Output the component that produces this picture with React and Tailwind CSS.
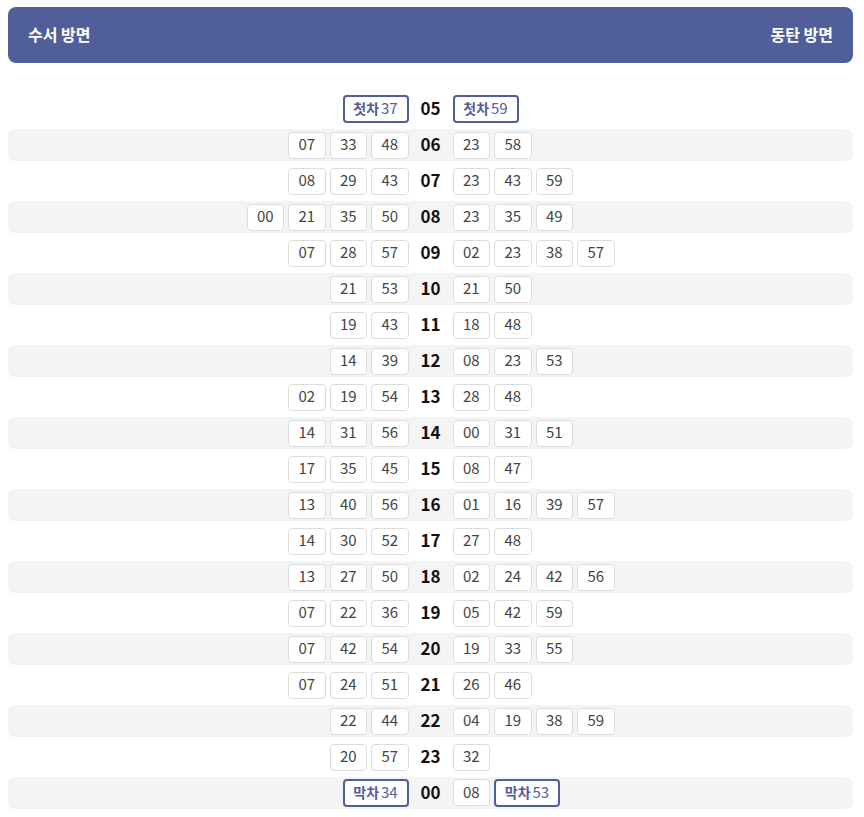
import React from "react";

const rows = [
  ["05", ["*첫차|37"], ["*첫차|59"]],
  ["06", ["07", "33", "48"], ["23", "58"]],
  ["07", ["08", "29", "43"], ["23", "43", "59"]],
  ["08", ["00", "21", "35", "50"], ["23", "35", "49"]],
  ["09", ["07", "28", "57"], ["02", "23", "38", "57"]],
  ["10", ["21", "53"], ["21", "50"]],
  ["11", ["19", "43"], ["18", "48"]],
  ["12", ["14", "39"], ["08", "23", "53"]],
  ["13", ["02", "19", "54"], ["28", "48"]],
  ["14", ["14", "31", "56"], ["00", "31", "51"]],
  ["15", ["17", "35", "45"], ["08", "47"]],
  ["16", ["13", "40", "56"], ["01", "16", "39", "57"]],
  ["17", ["14", "30", "52"], ["27", "48"]],
  ["18", ["13", "27", "50"], ["02", "24", "42", "56"]],
  ["19", ["07", "22", "36"], ["05", "42", "59"]],
  ["20", ["07", "42", "54"], ["19", "33", "55"]],
  ["21", ["07", "24", "51"], ["26", "46"]],
  ["22", ["22", "44"], ["04", "19", "38", "59"]],
  ["23", ["20", "57"], ["32"]],
  ["00", ["*막차|34"], ["08", "*막차|53"]],
];

function Box({ v }) {
  if (v.startsWith("*")) {
    const [label, min] = v.slice(1).split("|");
    return (
      <div className="h-[28px] w-[66px] pb-[3px] flex items-center justify-center rounded-[4px] border-2 border-[#4f5d99] bg-white text-[14px] text-[#4f5d99] leading-none">
        <span className="font-semibold">{label}</span>
        <span className="text-[15px] ml-[2px]">{min}</span>
      </div>
    );
  }
  return (
    <div className="h-[27px] w-[37.5px] pb-[3px] flex items-center justify-center rounded-[4px] border border-[#dcdcdc] bg-white text-[15px] text-[#444] leading-none">
      {v}
    </div>
  );
}

export default function App() {
  return (
    <div
      className="pl-2 pr-[11px] pt-[7px] bg-white min-h-[817px]"
      style={{ fontFamily: '"Noto Sans CJK KR", "Noto Sans", sans-serif' }}
    >
      <div className="h-[56px] rounded-lg bg-[#505f99] px-5 pb-[2px] flex items-center justify-between text-white font-bold text-[16px]">
        <span>수서 방면</span>
        <span>동탄 방면</span>
      </div>
      <div className="mt-[30px] flex flex-col gap-1">
        {rows.map(([h, l, r], i) => (
          <div
            key={h}
            className={
              "h-8 flex items-center rounded-md " +
              (i % 2 === 1 ? "bg-[#f4f4f4]" : "bg-white")
            }
          >
            <div className="flex-1 flex justify-end gap-1">
              {l.map((v, k) => (
                <Box key={k} v={v} />
              ))}
            </div>
            <div className="w-11 pb-[4px] text-center font-bold text-[17px] text-[#111] leading-none">
              {h}
            </div>
            <div className="flex-1 flex justify-start gap-1">
              {r.map((v, k) => (
                <Box key={k} v={v} />
              ))}
            </div>
          </div>
        ))}
      </div>
    </div>
  );
}
